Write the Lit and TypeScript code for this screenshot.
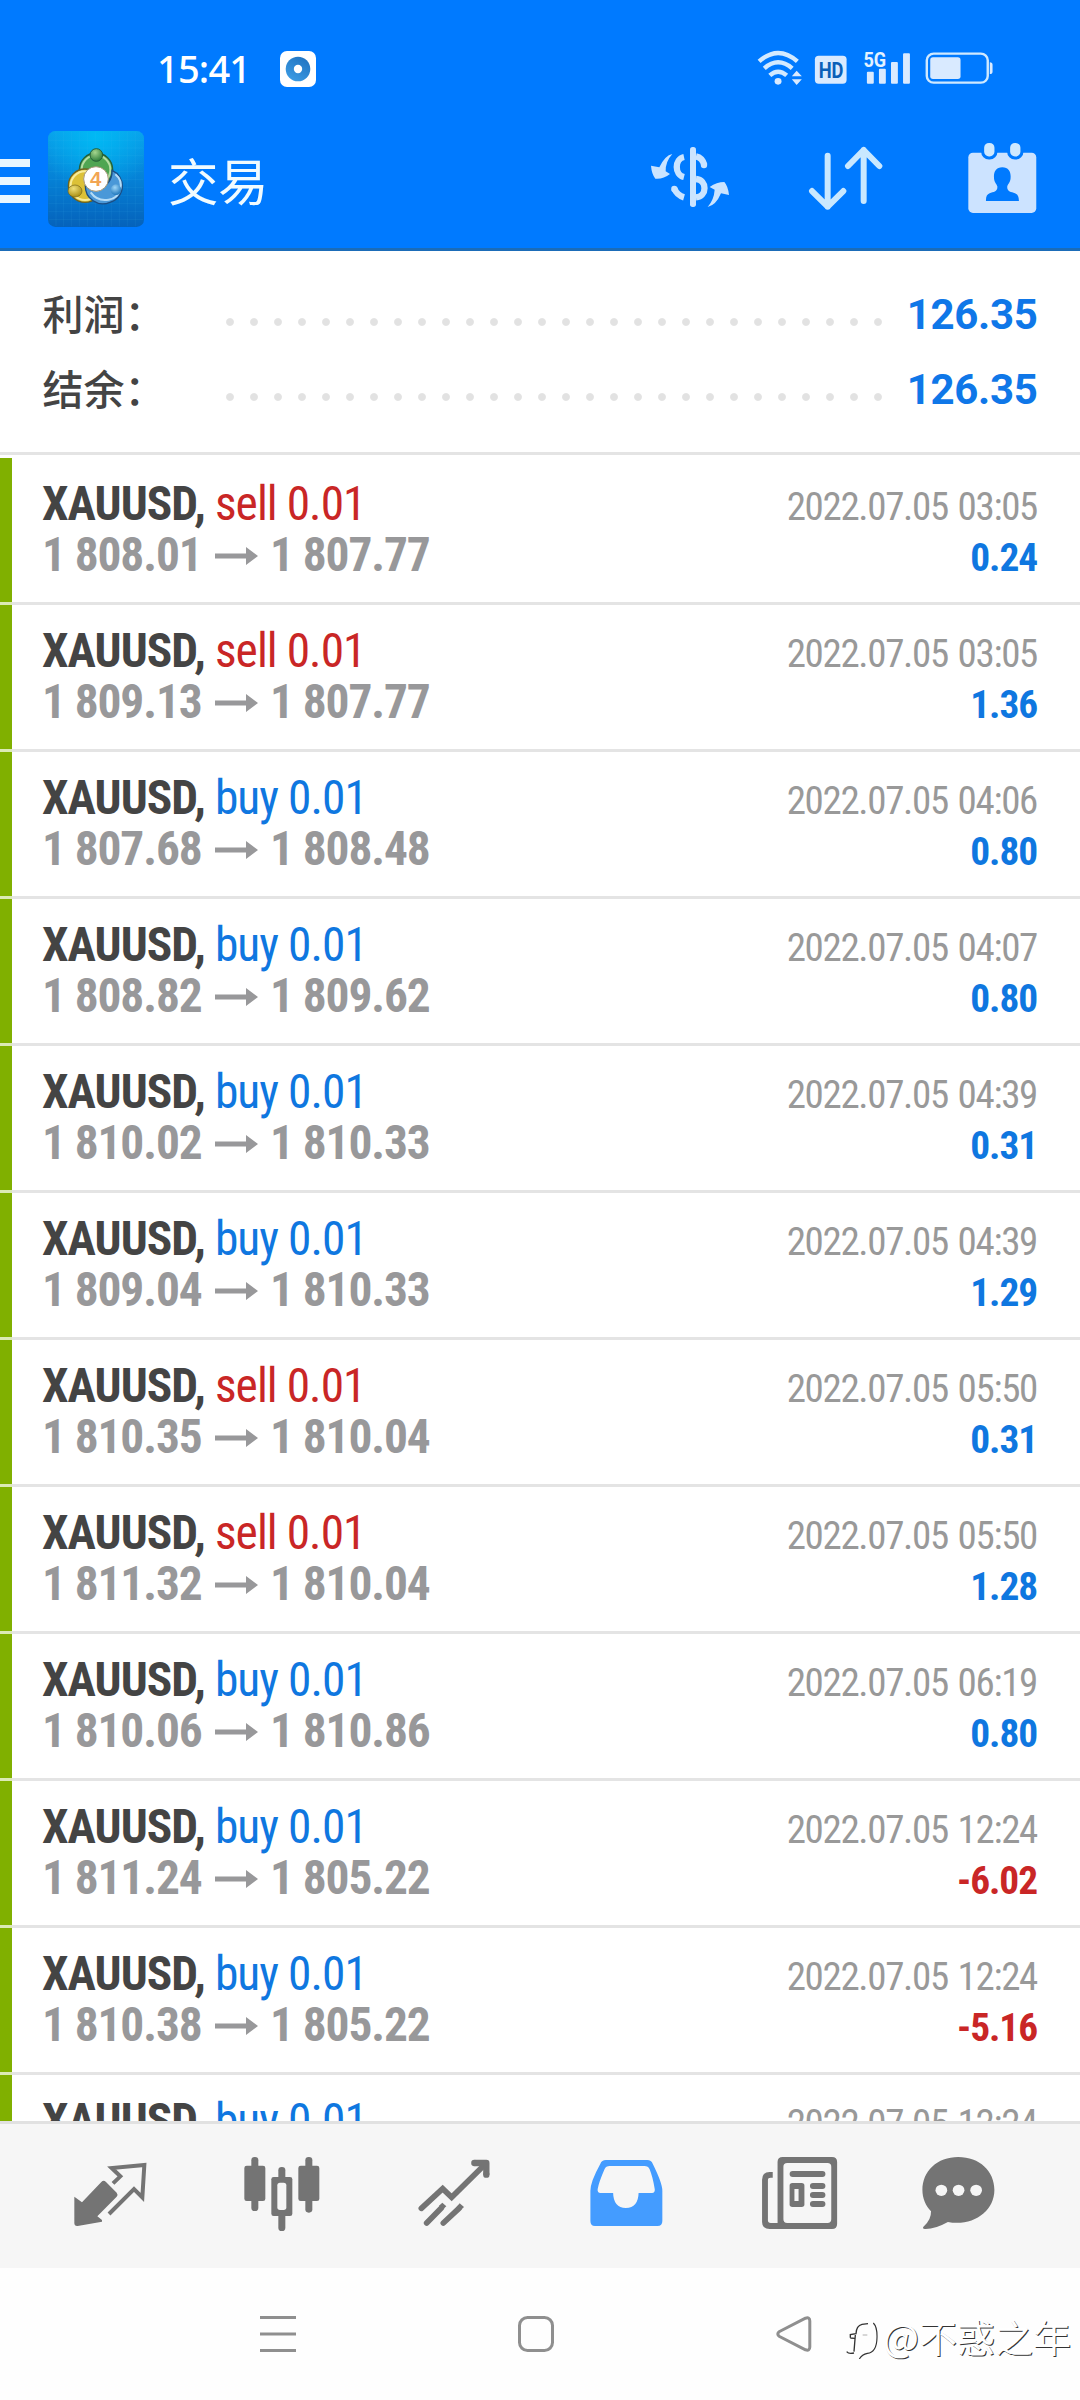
import { LitElement, html, svg, css } from "lit";
import { customElement, property } from "lit/decorators.js";
import { classMap } from "lit/directives/class-map.js";

interface Deal {
  side: "buy" | "sell";
  open: string;
  close: string;
  time: string;
  profit: string;
}

const deal = (side: "buy" | "sell", open: string, close: string, time: string, profit: string): Deal => ({
  side,
  open,
  close,
  time: `2022.07.05 ${time}`,
  profit,
});

const DEALS: Deal[] = [
  deal("sell", "1 808.01", "1 807.77", "03:05", "0.24"),
  deal("sell", "1 809.13", "1 807.77", "03:05", "1.36"),
  deal("buy", "1 807.68", "1 808.48", "04:06", "0.80"),
  deal("buy", "1 808.82", "1 809.62", "04:07", "0.80"),
  deal("buy", "1 810.02", "1 810.33", "04:39", "0.31"),
  deal("buy", "1 809.04", "1 810.33", "04:39", "1.29"),
  deal("sell", "1 810.35", "1 810.04", "05:50", "0.31"),
  deal("sell", "1 811.32", "1 810.04", "05:50", "1.28"),
  deal("buy", "1 810.06", "1 810.86", "06:19", "0.80"),
  deal("buy", "1 811.24", "1 805.22", "12:24", "-6.02"),
  deal("buy", "1 810.38", "1 805.22", "12:24", "-5.16"),
];

const NEXT_DEAL = { side: "buy", time: "2022.07.05 12:24" } as Deal;

@customElement("status-bar")
class StatusBar extends LitElement {
  static styles = css`
    :host {
      display: flex;
      align-items: center;
      box-sizing: border-box;
      height: 110px;
      padding: 27px 84px 0 157px;
      color: #fff;
    }
    .time {
      font: 500 38px/83px "Noto Sans", "Open Sans", sans-serif;
      letter-spacing: -0.8px;
      width: 123px;
      white-space: nowrap;
    }
    svg {
      display: block;
    }
    .icons {
      margin: -2px 0 0 auto;
    }
    .hd {
      font: 700 66px Roboto, sans-serif;
    }
    .gen {
      font: 700 62px Roboto, sans-serif;
    }
  `;

  render() {
    return html`
      <span class="time">15:41</span>
      <svg width="36" height="36" viewBox="0 0 36 36">
        <defs>
          <linearGradient id="disc" x1="0" y1="1" x2=".6" y2="0">
            <stop offset="0" stop-color="#3fa0e8" />
            <stop offset="1" stop-color="#2277c4" />
          </linearGradient>
        </defs>
        <rect width="36" height="36" rx="7" fill="#fff" />
        <circle cx="18" cy="18" r="12.3" fill="url(#disc)" />
        <circle cx="18" cy="18" r="4.2" fill="#fff" />
      </svg>
      <svg class="icons" width="241" height="40" viewBox="625 85 700 120" preserveAspectRatio="none">
        <g fill="none" stroke="#d3eaff" stroke-width="13">
          <path d="M637 125Q692 75 748 125" />
          <path d="M652 146Q692 110 733 146" />
          <path d="M668 167Q692 145 717 167" />
        </g>
        <g fill="#d9eaff">
          <circle cx="692" cy="185" r="10" />
          <path d="M732 170L746 153L761 170ZM732 179H761L746 196Z" />
          <rect x="799" y="108" width="92" height="84" rx="11" />
          <rect x="950" y="156" width="20" height="36" rx="3" />
          <rect x="985" y="147" width="20" height="45" rx="3" />
          <rect x="1020" y="127" width="20" height="65" rx="3" />
          <rect x="1055" y="101" width="20" height="91" rx="3" />
          <rect x="1134" y="113" width="88" height="65" rx="8" />
          <path d="M1307 128Q1315 128 1315 136V156Q1315 163 1307 163Z" />
        </g>
        <rect x="1124" y="102" width="177" height="87" rx="20" fill="none" stroke="#cfe9ff" stroke-width="7" />
        <text class="hd" x="810" y="174" textLength="72" lengthAdjust="spacingAndGlyphs" fill="#0a5fb8">HD</text>
        <text class="gen" x="940" y="142" textLength="66" lengthAdjust="spacingAndGlyphs" fill="#e4f2ff">5G</text>
      </svg>
    `;
  }
}

@customElement("title-bar")
class TitleBar extends LitElement {
  static styles = css`
    :host {
      display: flex;
      align-items: center;
      box-sizing: border-box;
      height: 141px;
      padding-right: 42.7px;
      border-bottom: 3px solid #1b6cb8;
    }
    svg {
      display: block;
      flex: none;
    }
    .menu {
      display: grid;
      gap: 10px;
      width: 30px;
      margin: 4px 18px 0 0;
    }
    .menu i {
      height: 8px;
      background: #e9f6ff;
    }
    .title {
      margin: 0 auto 1px 24px;
      color: #f1fbff;
      font: 400 50.5px/72px "Noto Sans CJK SC", sans-serif;
      letter-spacing: -0.5px;
    }
    .swap {
      margin: 0 78.3px 0 0;
    }
    .sort {
      margin-right: 83.4px;
    }
    .swap,
    .sort,
    .book {
      position: relative;
      top: -1px;
    }
    .four {
      font: 700 60px "Liberation Sans", sans-serif;
    }
  `;

  render() {
    const lines = [82, 105, 128, 152, 176, 200, 224, 248, 272, 296, 320];
    return html`
      <div class="menu"><i></i><i></i><i></i></div>
      <svg width="96" height="96" viewBox="54 62 288 288">
        <defs>
          <linearGradient id="bg" x1="0" y1="0" x2="0" y2="1">
            <stop offset="0" stop-color="#0a9fe9" />
            <stop offset=".5" stop-color="#0581d6" />
            <stop offset="1" stop-color="#0562bb" />
          </linearGradient>
          <radialGradient id="glow" cx=".5" cy=".05" r=".6">
            <stop offset="0" stop-color="#00b9f4" />
            <stop offset="1" stop-color="#00b9f4" stop-opacity="0" />
          </radialGradient>
          <radialGradient id="green" cx=".4" cy=".3" r=".7">
            <stop offset="0" stop-color="#a5d68f" />
            <stop offset="1" stop-color="#2f7f3b" />
          </radialGradient>
          <radialGradient id="gold" cx=".4" cy=".3" r=".7">
            <stop offset="0" stop-color="#f0e07a" />
            <stop offset="1" stop-color="#a98f14" />
          </radialGradient>
          <radialGradient id="blue" cx=".4" cy=".3" r=".7">
            <stop offset="0" stop-color="#9fd6f8" />
            <stop offset="1" stop-color="#2078bd" />
          </radialGradient>
        </defs>
        <rect x="54" y="62" width="288" height="288" rx="22" fill="url(#bg)" />
        <rect x="54" y="62" width="288" height="288" rx="22" fill="url(#glow)" />
        <g stroke="#5cc4f3" stroke-opacity=".14" stroke-width="2">
          ${lines.map((p) => svg`<path d="M${p - 4} 64V348M56 ${p + 8}H340" />`)}
        </g>
        <circle cx="198" cy="178" r="50" fill="#4fa552" stroke="#255f39" stroke-width="4" />
        <circle cx="198" cy="178" r="43" fill="none" stroke="#b4dda3" stroke-width="6" />
        <circle cx="165" cy="226" r="50" fill="#dcc137" stroke="#6d6220" stroke-width="4" />
        <circle cx="165" cy="226" r="43" fill="none" stroke="#f8ec9a" stroke-width="6" />
        <path d="M166 226A53 53 0 0 0 240 276A51 51 0 0 0 246 180Q248 220 205 238Z" fill="#4a98d8" stroke="#1c4d83" stroke-width="4" />
        <path d="M182 246Q202 274 236 268A43 43 0 0 0 256 192" fill="none" stroke="#b5dcf7" stroke-width="6" />
        <circle cx="199" cy="134" r="19" fill="url(#green)" stroke="#255f39" stroke-width="3" />
        <ellipse cx="135" cy="242" rx="21" ry="18" fill="url(#gold)" stroke="#75651a" stroke-width="2" />
        <circle cx="258" cy="238" r="16" fill="url(#blue)" />
        <circle cx="198" cy="206" r="37" fill="#fff" stroke="#a79777" stroke-width="3" />
        <text class="four" x="180" y="228" textLength="34" lengthAdjust="spacingAndGlyphs" fill="#f2a553">4</text>
      </svg>
      <span class="title">交易</span>
      <svg class="swap" width="80" height="76.7" viewBox="30 30 240 230" fill="#cbe4ff">
        <path d="M97 72Q75 76 58 112L33 107Q35 132 46 146Q70 148 90 132L77 124Q76 95 97 72Z" />
        <path d="M203 231Q228 226 243 190L267 195Q264 168 253 156Q230 156 209 171L224 179Q222 209 203 231Z" />
        <rect x="150" y="51" width="18" height="180" rx="8" />
        <g fill="none" stroke="#cbe4ff" stroke-width="19">
          <path d="M132 81C103 87 103 134 132 141M168 79Q187 83 193 105" />
          <path d="M168 147C202 150 202 199 168 202" />
          <path d="M103 176Q111 196 132 202" />
        </g>
        <circle cx="192" cy="105" r="9.5" />
        <circle cx="103" cy="177" r="9.5" />
      </svg>
      <svg class="sort" width="75" height="76.7" viewBox="505 30 225 230" fill="none" stroke="#c9e8ff" stroke-width="18" stroke-linecap="round" stroke-linejoin="round">
        <path d="M564 77V230M517 183L564 230L611 183M672 213V60M625 108L672 60L719 108" />
      </svg>
      <svg class="book" width="70.6" height="76.7" viewBox="980 30 212 230">
        <rect x="984" y="68" width="204" height="181" rx="14" fill="#cce3ff" />
        <g fill="#cfe9ff" stroke="#007aff" stroke-width="9">
          <rect x="1027" y="34" width="40" height="50" rx="19" />
          <rect x="1105" y="34" width="40" height="50" rx="19" />
        </g>
        <path fill="#007aff" d="M1086 112C1105 112 1112 126 1111 142C1111 157 1104 160 1101 169C1099 185 1112 186 1124 190Q1136 194 1136 213H1037Q1036 194 1048 190C1060 186 1073 185 1071 169C1068 160 1061 157 1061 142C1060 126 1067 112 1086 112Z" />
      </svg>
    `;
  }
}

@customElement("summary-row")
class SummaryRow extends LitElement {
  static styles = css`
    :host {
      display: flex;
      align-items: center;
      height: 75px;
      padding: 0 42.5px 0 42.5px;
    }
    .label {
      width: 175.5px;
      margin-top: -4px;
      color: #444;
      font: 500 41px/75px "Noto Sans CJK SC", sans-serif;
      white-space: nowrap;
    }
    .dots {
      width: 672px;
      height: 24px;
      margin-top: 15px;
      background: radial-gradient(circle, #e2e2e2 3.4px, transparent 4.4px) 0 0 / 24px 24px;
    }
    .value {
      margin-left: auto;
      color: #0f77e8;
      font: 700 42px/75px Roboto, sans-serif;
      letter-spacing: -0.3px;
    }
  `;
  @property() label = "";
  @property() value = "";

  render() {
    return html`<span class="label">${this.label}</span><span class="dots"></span><span class="value">${this.value}</span>`;
  }
}

@customElement("deal-row")
class DealRow extends LitElement {
  static styles = css`
    :host {
      display: block;
      flex: none;
      box-sizing: border-box;
      height: 147px;
      padding: 21px 43px 0 42px;
      background:
        linear-gradient(#dbeab5, #dbeab5) 0 100% / 12px 3px no-repeat,
        linear-gradient(#e4e4e4, #e4e4e4) 0 100% / 100% 3px no-repeat,
        linear-gradient(#80b000, #80b000) 0 0 / 12px 100% no-repeat;
      font: 47.4px/51px "Roboto Condensed", Roboto, sans-serif;
    }
    .line {
      display: flex;
      align-items: baseline;
      justify-content: space-between;
      height: 51px;
      white-space: pre;
    }
    .name {
      letter-spacing: -0.95px;
    }
    .symbol {
      color: #444;
      font-weight: 700;
    }
    .buy,
    .gain {
      color: #0f77e0;
    }
    .sell,
    .loss {
      color: #c92626;
    }
    .prices {
      display: flex;
      align-items: baseline;
      color: #98989a;
      font-weight: 700;
      letter-spacing: -1.1px;
    }
    .prices svg {
      width: 43px;
      height: 18px;
      margin: 0 12px 0 13.5px;
      fill: #98989a;
      transform: translateY(-6px);
    }
    .date {
      color: #999;
      font-size: 39px;
      letter-spacing: -1.33px;
      word-spacing: 2px;
    }
    .profit {
      font-size: 39.4px;
      font-weight: 700;
      letter-spacing: -1.1px;
    }
  `;
  @property({ attribute: false }) deal!: Deal;

  render() {
    const { side, open, close, time, profit } = this.deal;
    const loss = profit?.startsWith("-") ?? false;
    return html`
      <div class="line"><span class="name"><span class="symbol">XAUUSD,</span><span class=${side}> ${side} 0.01</span></span><span class="date">${time}</span></div>
      ${profit
        ? html`<div class="line"><span class="prices"><span>${open}</span><svg viewBox="0 0 43 18"><path d="M0 6.5H31V0L43 9L31 18V11.5H0Z" /></svg><span>${close}</span></span><span class=${classMap({ profit: true, gain: !loss, loss })}>${profit}</span></div>`
        : ""}
    `;
  }
}

@customElement("tab-bar")
class TabBar extends LitElement {
  static styles = css`
    :host {
      display: flex;
      align-items: center;
      gap: 95px;
      box-sizing: border-box;
      height: 147px;
      padding-left: 71.7px;
      border-top: 3px solid #e1e1e1;
      background: #f6f6f6;
    }
    svg {
      flex: none;
      height: 80px;
      fill: #747474;
    }
    .active {
      fill: #449cff;
    }
    .chat {
      margin-left: -14.5px;
    }
    .line {
      fill: none;
      stroke: #747474;
    }
    .hole {
      fill: #f6f6f6;
    }
  `;

  render() {
    return html`
      <svg width="75" viewBox="95 48 225 240">
        <path d="M102 170L125 187L183 126Q190 119 197 126L229 158Q234 164 229 170L171 229L185 240V245L112 258Q102 259 102 249Z" />
        <path class="line" stroke-width="12" d="M218 130L240 109L214 84L312 75L306 172L281 147L206 222" />
      </svg>
      <svg width="80" viewBox="605 48 240 240">
        <rect x="633" y="51" width="21" height="162" rx="10" />
        <rect x="612" y="77" width="63" height="106" rx="7" />
        <rect x="795" y="51" width="21" height="167" rx="10" />
        <rect x="774" y="77" width="63" height="106" rx="7" />
        <rect x="714" y="81" width="21" height="192" rx="10" />
        <rect x="693" y="111" width="63" height="117" rx="7" />
        <rect class="hole" x="711" y="128" width="27" height="82" rx="8" />
      </svg>
      <svg width="76.5" viewBox="1130 48 229.5 240">
        <g class="line" stroke-width="17" stroke-linecap="round">
          <path d="M1143 205L1207 146L1234 172L1332 75" />
          <path stroke-width="19" stroke-linecap="butt" stroke-linejoin="round" d="M1303 69H1338V104" />
          <path d="M1159 249L1203 204M1209 249L1256 205" />
        </g>
        <circle cx="1302" cy="69" r="9.5" />
        <circle cx="1338" cy="104" r="9.5" />
        <path d="M1206 188L1218 199L1208 208L1196 197ZM1258 190L1271 201L1261 211L1249 200Z" />
      </svg>
      <svg class="active" width="77.1" viewBox="140 288 224 240" preserveAspectRatio="none">
        <path fill-rule="evenodd" d="M192 300H312Q324 300 328 311Q356 369 356 392V483Q356 498 342 498H160Q147 498 147 483V392Q147 365 176 311Q180 300 192 300ZM203 318Q192 318 188 328Q171 368 168 388Q167 399 176 399H213Q214 443 250 444Q286 443 287 399H326Q335 399 334 388Q328 350 319 328Q315 318 304 318Z" />
      </svg>
      <svg width="79.2" viewBox="640 288 230 240" preserveAspectRatio="none">
        <path fill-rule="evenodd" d="M706 291H849Q864 291 864 306V491Q864 507 849 507H668Q646 507 646 486V359Q646 337 668 336H677V353H671Q663 353 663 360V481Q663 489 671 489H691V306Q691 291 706 291ZM719 309Q708 309 708 320V478Q708 489 719 489H836Q847 489 847 478V320Q847 309 836 309Z" />
        <rect x="726" y="333" width="104" height="18" rx="9" />
        <rect x="726" y="369" width="43" height="72" rx="8" />
        <rect class="hole" x="740" y="387" width="12" height="36" />
        <rect x="785" y="369" width="45" height="18" rx="9" />
        <rect x="785" y="396" width="45" height="18" rx="9" />
        <rect x="785" y="423" width="45" height="18" rx="9" />
      </svg>
      <svg class="chat" width="76.8" viewBox="1102 288 223 240" preserveAspectRatio="none">
        <path d="M1213 291C1275 291 1318 333 1318 390C1318 455 1255 500 1183 486Q1145 508 1116 507Q1108 505 1112 500Q1135 480 1134 454C1118 436 1109 415 1109 390C1109 333 1152 291 1213 291Z" />
        <g class="hole">
          <circle cx="1164" cy="391" r="17" />
          <circle cx="1214" cy="391" r="17" />
          <circle cx="1265" cy="391" r="17" />
        </g>
      </svg>
    `;
  }
}

@customElement("app-root")
class AppRoot extends LitElement {
  static styles = css`
    :host {
      display: flex;
      flex-direction: column;
      position: relative;
      width: 1080px;
      height: 2400px;
      overflow: hidden;
      background: #fff;
    }
    .top {
      flex: none;
      background: #007aff;
    }
    .summary {
      flex: none;
      box-sizing: border-box;
      height: 207px;
      padding-top: 26px;
      background: linear-gradient(#e4e4e4, #e4e4e4) 0 201px / 100% 3px no-repeat;
    }
    .deals {
      display: flex;
      flex-direction: column;
      flex: 1;
      min-height: 0;
      overflow: hidden;
    }
    tab-bar {
      flex: none;
    }
    .system {
      display: flex;
      align-items: center;
      flex: none;
      gap: 222px;
      height: 132px;
      padding-left: 260px;
      background: #fefefe;
    }
    .system svg {
      fill: none;
      stroke: #8f8f8f;
      stroke-width: 3;
    }
    .watermark {
      position: absolute;
      right: 9px;
      bottom: 36px;
      display: flex;
      align-items: center;
      color: #fff;
      font: 400 38px/56px "Noto Sans CJK SC", sans-serif;
      text-shadow: 1px 1px 0.6px #333;
    }
    .watermark svg {
      margin: 5px 5px 0 0;
      fill: none;
      stroke: #333;
    }
  `;

  render() {
    return html`
      <div class="top"><status-bar></status-bar><title-bar></title-bar></div>
      <div class="summary">
        <summary-row label="利润：" value="126.35"></summary-row>
        <summary-row label="结余：" value="126.35"></summary-row>
      </div>
      <div class="deals">${[...DEALS, NEXT_DEAL].map((d) => html`<deal-row .deal=${d}></deal-row>`)}</div>
      <tab-bar></tab-bar>
      <div class="system">
        <svg width="36" height="36"><path d="M0 1.5H36M0 18H36M0 34.5H36" /></svg>
        <svg width="36" height="36"><rect x="1.5" y="1.5" width="33" height="33" rx="8" /></svg>
        <svg width="36" height="36"><path stroke-linejoin="round" d="M3.5 15.5L29.5 2.2Q33.8 .8 33.8 5V31Q33.8 35.2 29.5 33.8L3.5 20.5Q0 18 3.5 15.5Z" /></svg>
      </div>
      <div class="watermark">
        <svg width="36" height="40" viewBox="0 0 108 120">
          <path stroke-width="4" d="M25 56V47L42 44Q43 20 60 16L78 14M25 57L38 58M40 48L36 98M14 98Q20 106 36 102" />
          <path stroke-width="3.5" d="M94 12Q106 24 105 56Q104 100 76 103Q60 106 52 120" />
          <path stroke-width="2" stroke="#888" d="M62 48H76" />
        </svg>
        <span>@不惑之年</span>
      </div>
    `;
  }
}
